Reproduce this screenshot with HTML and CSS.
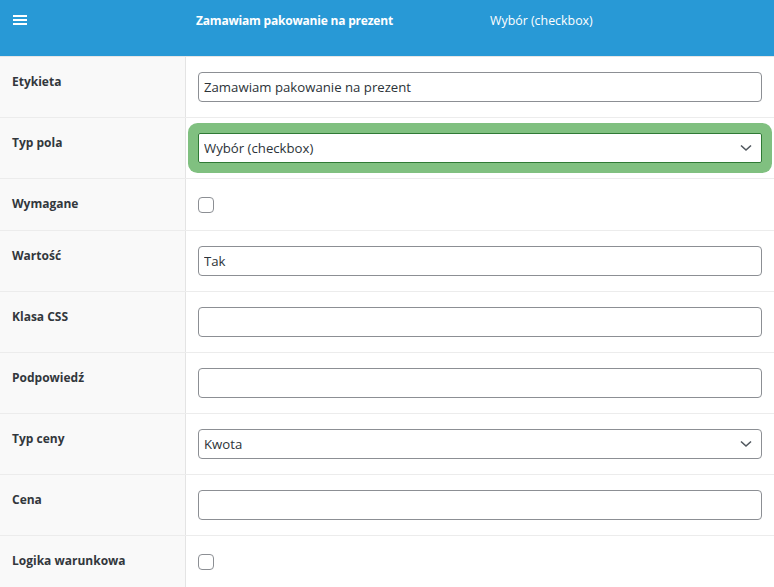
FILE: index.html
```html
<!DOCTYPE html>
<html lang="pl">
<head>
<meta charset="utf-8">
<title>Pole</title>
<link rel="stylesheet" href="styles.css">
</head>
<body>
<div class="page">
  <div class="topbar">
    <div class="menu-cell">
      <span class="burger"><i></i><i></i><i></i></span>
    </div>
    <div class="top-title">Zamawiam pakowanie na prezent</div>
    <div class="top-type">Wybór (checkbox)</div>
  </div>

  <div class="row">
    <div class="label">Etykieta</div>
    <div class="value"><input class="field" type="text" value="Zamawiam pakowanie na prezent"></div>
  </div>
  <div class="row">
    <div class="label">Typ pola</div>
    <div class="value">
      <div class="select-wrap highlight">
        <select class="field select"><option>Wybór (checkbox)</option></select>
        <svg class="chev" width="12" height="8" viewBox="0 0 12 8"><path d="M1 1.5 L6 6 L11 1.5" fill="none" stroke="#50575e" stroke-width="1.6"/></svg>
      </div>
    </div>
  </div>
  <div class="row">
    <div class="label">Wymagane</div>
    <div class="value check"><span class="box"></span></div>
  </div>
  <div class="row">
    <div class="label">Wartość</div>
    <div class="value"><input class="field" type="text" value="Tak"></div>
  </div>
  <div class="row">
    <div class="label">Klasa CSS</div>
    <div class="value"><input class="field" type="text" value=""></div>
  </div>
  <div class="row">
    <div class="label">Podpowiedź</div>
    <div class="value"><input class="field" type="text" value=""></div>
  </div>
  <div class="row">
    <div class="label">Typ ceny</div>
    <div class="value">
      <div class="select-wrap">
        <select class="field select"><option>Kwota</option></select>
        <svg class="chev" width="12" height="8" viewBox="0 0 12 8"><path d="M1 1.5 L6 6 L11 1.5" fill="none" stroke="#50575e" stroke-width="1.6"/></svg>
      </div>
    </div>
  </div>
  <div class="row">
    <div class="label">Cena</div>
    <div class="value"><input class="field" type="text" value=""></div>
  </div>
  <div class="row">
    <div class="label">Logika warunkowa</div>
    <div class="value check"><span class="box"></span></div>
  </div>
</div>
</body>
</html>
```
FILE: styles.css
```css
* { box-sizing: border-box; }
html, body { margin: 0; padding: 0; background: #ffffff; }
body {
  font-family: "Open Sans", "Noto Sans", "DejaVu Sans", sans-serif;
  color: #2c3338;
  overflow: hidden;
}
.page { width: 774px; height: 587px; overflow: hidden; }

.topbar {
  display: grid;
  grid-template-columns: 186px 294px 1fr;
  height: 57px;
  background: #2899d6;
  border-bottom: 1px solid #e6e6e6;
  color: #ffffff;
  font-size: 12px;
  line-height: 18px;
}
.menu-cell { padding: 15px 13px 0; }
.burger { display: flex; flex-direction: column; gap: 2px; width: 14px; }
.burger i { display: block; height: 2px; background: #ffffff; }
.top-title { padding: 12px 10px 0; font-weight: 700; letter-spacing: -0.2px; }
.top-type { padding: 12px 10px 0; font-size: 12.4px; }

.row {
  display: grid;
  grid-template-columns: 186px 1fr;
  border-bottom: 1px solid #ececec;
}
.label {
  background: #f9f9f9;
  border-right: 1px solid #e4e4e4;
  padding: 15px 12px 0;
  font-size: 12px;
  line-height: 19px;
  font-weight: 700;
  color: #32373c;
}
.value { padding: 15px 12px; }
.value.check { padding: 18px 12px 17px; }

.field {
  display: block;
  width: 100%;
  height: 30px;
  margin: 0;
  padding: 0 5px;
  border: 1px solid #8c8f94;
  border-radius: 4px;
  background: #ffffff;
  font-family: inherit;
  font-size: 13.2px;
  color: #2c3338;
  outline: none;
}
.select-wrap { position: relative; }
.select {
  -webkit-appearance: none;
  appearance: none;
  padding-right: 28px;
}
.chev { position: absolute; right: 10px; top: 11px; }
.highlight { border-radius: 3px; box-shadow: 0 0 0 10px #80c080; }
.highlight .select { border-color: #2f7a35; border-radius: 2px; }

.box {
  display: block;
  width: 16px;
  height: 16px;
  border: 1px solid #8c8f94;
  border-radius: 4px;
  background: #ffffff;
}
```
